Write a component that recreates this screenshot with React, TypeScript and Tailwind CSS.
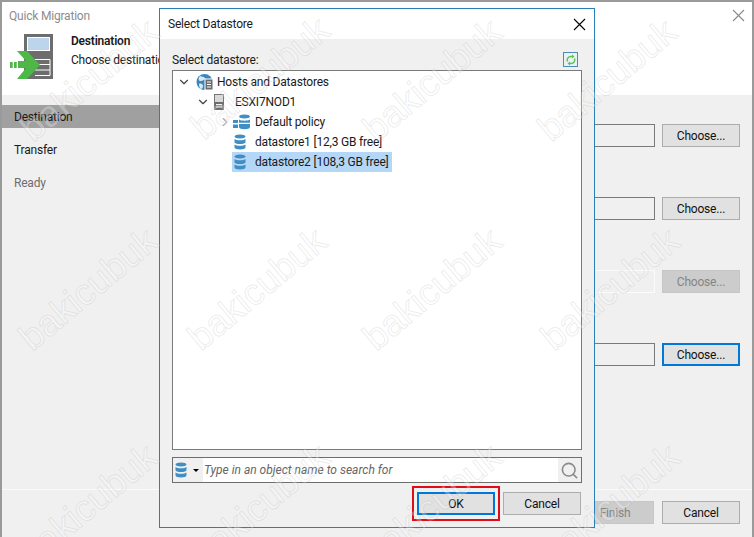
import { ChevronDown, ChevronRight, Search } from "lucide-react";

function CloseIcon({ className = "" }: { className?: string }) {
  return (
    <svg viewBox="0 0 13 13" className={`h-[13px] w-[13px] ${className}`}>
      <path d="M1 1l11 11M12 1 1 12" fill="none" stroke="currentColor" strokeWidth="1.100" />
    </svg>
  );
}

function DatastoreIcon({ className = "" }: { className?: string }) {
  return (
    <svg viewBox="0 0 12 16" className={`h-4 w-3 ${className}`}>
      <path d="M.5 2.500C.5 1.200 3 .5 6 .5s5.500.7 5.500 2S9 4.500 6 4.500.5 3.800.5 2.500Z" fill="#3f8fc4" />
      <path d="M.5 5c1 .9 3 1.300 5.500 1.300S10.500 5.900 11.500 5v3.200c0 1-2.500 1.800-5.500 1.800S.5 9.200.5 8.200Z" fill="#3f8fc4" />
      <path d="M.5 10.500c1 .9 3 1.300 5.500 1.300s4.500-.4 5.500-1.300v2.700c0 1.300-2.500 2.300-5.500 2.300S.5 14.500.5 13.200Z" fill="#3f8fc4" />
    </svg>
  );
}

function PolicyIcon() {
  return (
    <svg viewBox="0 0 17 16" className="h-4 w-[17px]">
      <path d="M6 2.500C6 1.200 8.500.5 11.500.5S17 1.200 17 2.500s-2.500 2-5.500 2S6 3.800 6 2.500Z" fill="#3f8fc4" />
      <path d="M6 5.500c1 .8 3 1.200 5.500 1.200S16 6.300 17 5.500v3.200H6Z" fill="#3f8fc4" />
      <path d="M6 10h11v3c0 1.300-2.500 2.300-5.500 2.300S6 14.300 6 13Z" fill="#3f8fc4" />
      <path d="M0 6h5v3H0zM0 10.500h5V14H0z" fill="#3f8fc4" />
    </svg>
  );
}

function WizardIcon() {
  return (
    <svg viewBox="0 0 46 46" className="h-[46px] w-[46px]">
      <rect x="15" y="1" width="29" height="45" fill="#6d6d6d" />
      <rect x="18.500" y="4.500" width="22" height="13" fill="#bcd5ec" stroke="#fff" />
      <path d="M26 26.500h15v16H26M26 31.500h15M26 37h15" fill="none" stroke="#fff" />
      <path d="M8 18h10l13 14-13 14H8l9-11H9v-7h8Z" fill="#4db848" />
      <path d="M1 29h2.700v6H1zM5 29h2.700v6H5z" fill="#4db848" />
    </svg>
  );
}

function HostsIcon() {
  return (
    <svg viewBox="0 0 18 18" className="h-[18px] w-[18px]">
      <circle cx="8.500" cy="9" r="8" fill="#3b86bd" />
      <path d="M4 3c2 1 4 .5 5 2S6 8 4.500 8 1.500 6 4 3ZM3 11c2-1 4 0 4 2s-1 3-2 3-2-3-2-5Z" fill="#d7e8f4" />
      <rect x="9" y="6" width="8" height="11" fill="#6a6a6a" stroke="#fff" />
      <path d="M11 9h4M11 11.500h4M11 14h4" stroke="#fff" />
    </svg>
  );
}

function ServerIcon() {
  return (
    <svg viewBox="0 0 10 16" className="h-4 w-2.5">
      <rect x="0.500" y="0.500" width="9" height="15" fill="#d9d9d9" stroke="#777" />
      <rect x="0.500" y="8" width="9" height="7.500" fill="#6d6d6d" />
      <path d="M2 10.500h6M2 13h6" stroke="#fff" />
    </svg>
  );
}

function RefreshIcon() {
  return (
    <div className="flex h-[15px] w-[15px] items-center justify-center border border-[#4b8db5] bg-[#e8f1f5]">
      <svg viewBox="0 0 12 12" className="h-3 w-3">
        <path d="M2.500 7.500C1.500 5 3 2.500 6 2.500h1.500M9.500 4.500c1 2.500-.5 5-3.500 5H4.500" fill="none" stroke="#5cc44f" strokeWidth="1.500" />
        <path d="M7 .5 9.500 2.500 7 4.500ZM5 7.500 2.500 9.500 5 11.500Z" fill="#5cc44f" />
      </svg>
    </div>
  );
}

function WizardButton({ label, tone = "normal" }: { label: string; tone?: "normal" | "disabled" | "focus" }) {
  const styles = {
    normal: "border border-[#adadad] bg-[#e1e1e1] text-[#111]",
    disabled: "border border-[#c6c6c6] bg-[#cccccc] text-[#858585]",
    focus: "border-2 border-[#0078d7] bg-[#e1e1e1] text-[#111]",
  };
  return <div className={`flex h-[23px] w-[78px] shrink-0 items-center justify-center text-xs ${styles[tone]}`}>{label}</div>;
}

function ChooseRow({ tone = "normal" }: { tone?: "normal" | "disabled" | "focus" }) {
  return (
    <div className="flex items-center justify-end gap-[7px]">
      <div className={`h-[23px] w-[120px] border ${tone === "disabled" ? "border-[#fbfbfb] bg-[#f0f0f0]" : "border-[#7a7a7a] bg-[#f0f0f0]"}`} />
      <WizardButton label="Choose..." tone={tone} />
    </div>
  );
}

const watermarks = [
  "left-[87px] top-[78px]",
  "left-[258px] top-[76px]",
  "left-[430px] top-[78px]",
  "left-[605px] top-[78px]",
  "left-[86px] top-[287px]",
  "left-[255px] top-[287px]",
  "left-[430px] top-[287px]",
  "left-[608px] top-[287px]",
  "left-[86px] top-[503px]",
  "left-[258px] top-[503px]",
  "left-[430px] top-[503px]",
  "left-[608px] top-[503px]",
];

export default function App() {
  return (
    <div className="relative h-[537px] w-[754px] overflow-hidden border-x-2 border-t-2 border-[#9a9a9a] bg-white font-['Roboto',sans-serif] text-xs tracking-[-0.2px] text-[#1a1a1a]">
      <div className="flex h-full flex-col">
        <div className="flex h-[93px] shrink-0 flex-col bg-white">
          <div className="flex items-start justify-between pl-[7px] pr-[7px] pt-1.5">
            <span className="text-[#8c8c8c]">Quick Migration</span>
            <CloseIcon className="mt-[1px] text-[#8a8a8a]" />
          </div>
          <div className="flex items-start gap-4 pl-[7px] pt-[9px]">
            <WizardIcon />
            <div className="flex flex-col gap-[3px]">
              <span className="font-semibold">Destination</span>
              <span>Choose destination</span>
            </div>
          </div>
        </div>
        <div className="flex min-h-0 flex-1 bg-[#f0f0f0]">
          <div className="flex w-[157px] shrink-0 flex-col pt-2.5">
            <div className="flex h-[23px] items-center bg-[#a0a0a0] pl-3">Destination</div>
            <div className="flex h-[33px] items-center pl-3 pt-[11px]">Transfer</div>
            <div className="flex h-[33px] items-center pl-3 pt-[11px] text-[#6e6e6e]">Ready</div>
          </div>
          <div className="flex min-w-0 flex-1 flex-col">
            <div className="flex flex-1 flex-col gap-[50px] pr-3 pt-[29px]">
              <ChooseRow />
              <ChooseRow />
              <ChooseRow tone="disabled" />
              <ChooseRow tone="focus" />
            </div>
          </div>
        </div>
        <div className="flex h-[48px] shrink-0 justify-end gap-2 border-t border-[#fafafa] bg-[#f0f0f0] pr-3 pt-[11px]">
          <WizardButton label="Finish" tone="disabled" />
          <WizardButton label="Cancel" />
        </div>
      </div>

      <div className="absolute left-[157px] top-[6px] flex h-[520px] w-[436px] flex-col border border-[#2a7fb8] bg-[#f0f0f0]">
        <div className="flex h-[30px] shrink-0 items-center justify-between bg-white pl-2 pr-[8px]">
          <span>Select Datastore</span>
          <CloseIcon className="text-black" />
        </div>
        <div className="flex min-h-0 flex-1 flex-col px-3 pb-3 pt-[6px]">
          <div className="flex h-[25px] shrink-0 items-center justify-between pr-[4px] pt-[4px]">
            <span>Select datastore:</span>
            <RefreshIcon />
          </div>
          <div className="min-h-0 flex-1 border border-[#7a7a7a] bg-white pl-1 pt-[1px]">
            <div className="flex h-5 items-center">
              <ChevronDown className="h-3.5 w-3.5 text-[#444]" strokeWidth={2} />
              <div className="ml-[3px] flex w-[21px] justify-center"><HostsIcon /></div>
              <span className="ml-[2px]">Hosts and Datastores</span>
            </div>
            <div className="flex h-5 items-center pl-[19px]">
              <ChevronDown className="h-3.5 w-3.5 text-[#444]" strokeWidth={2} />
              <div className="ml-[2px] flex w-[14px] justify-center"><ServerIcon /></div>
              <span className="ml-[9px]">ESXI7NOD1</span>
            </div>
            <div className="flex h-5 items-center pl-[41px]">
              <ChevronRight className="h-3.5 w-3.5 text-[#a6a6a6]" strokeWidth={2} />
              <div className="ml-[1px]"><PolicyIcon /></div>
              <span className="ml-[5px]">Default policy</span>
            </div>
            <div className="flex h-5 items-center pl-[56px]">
              <DatastoreIcon className="ml-[1px]" />
              <span className="ml-[9px]">datastore1 [12,3 GB free]</span>
            </div>
            <div className="ml-[55px] flex h-5 w-fit items-center bg-[#b5d7f7] pr-[3px]">
              <DatastoreIcon className="ml-[2px]" />
              <span className="ml-[9px]">datastore2 [108,3 GB free]</span>
            </div>
          </div>
          <div className="mt-[7px] flex h-[26px] shrink-0 items-center border border-[#6e6e6e] bg-white">
            <div className="flex h-full w-[30px] items-center bg-[#f0f0f0] pl-[2px]">
              <DatastoreIcon />
              <div className="ml-[6px] h-0 w-0 border-x-[3px] border-t-[3px] border-x-transparent border-t-black" />
            </div>
            <span className="flex-1 pl-[1px] italic tracking-normal text-[#666]">Type in an object name to search for</span>
            <div className="flex h-full w-[23px] items-center justify-center bg-[#f0f0f0]">
              <Search className="h-[19px] w-[19px] text-[#8a8a8a]" strokeWidth={2} />
            </div>
          </div>
          <div className="mt-[9px] flex h-[23px] shrink-0 justify-end gap-2 pr-[1px]">
            <div className="relative">
              <WizardButton label="OK" tone="focus" />
              <div className="pointer-events-none absolute -inset-x-[5px] -bottom-[6px] -top-[6px] border-2 border-[#e00c18]" />
            </div>
            <WizardButton label="Cancel" />
          </div>
        </div>
      </div>

      {watermarks.map((pos) => (
        <span
          key={pos}
          className={`pointer-events-none absolute ${pos} -translate-x-1/2 -translate-y-1/2 -rotate-[40deg] font-['Liberation_Sans',sans-serif] text-[37px] leading-none tracking-normal text-white/30 [-webkit-text-stroke:1px_rgba(150,150,150,0.18)]`}
        >
          bakicubuk
        </span>
      ))}
    </div>
  );
}
